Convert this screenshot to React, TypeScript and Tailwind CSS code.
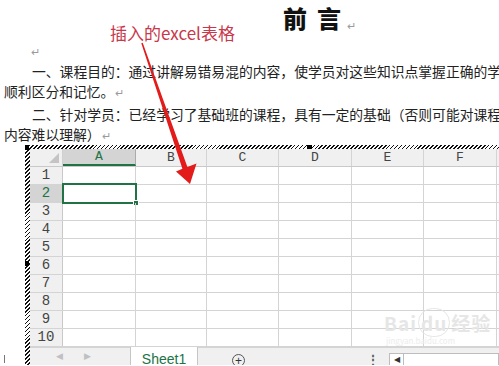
import React from 'react';

const cols = [
  { label: 'A', w: 'w-[73px]' },
  { label: 'B', w: 'w-[71px]' },
  { label: 'C', w: 'w-[72px]' },
  { label: 'D', w: 'w-[73px]' },
  { label: 'E', w: 'w-[72px]' },
  { label: 'F', w: 'w-[73px]' },
  { label: 'G', w: 'w-[72px]' },
];

const rows = [1, 2, 3, 4, 5, 6, 7, 8, 9, 10];

const Mark = () => <span className="text-[11px] text-[#9a9a9a] ml-[1px]">↵</span>;

export default function App() {
  return (
    <div className="relative w-[499px] h-[366px] overflow-hidden bg-white font-['Noto_Sans_CJK_SC',sans-serif] text-[#222]">
      {/* Title */}
      <div className="h-[40px] pl-[283px] pt-[3px] flex items-start">
        <span className="text-[24px] leading-[30px] font-black tracking-[10px] text-[#111]">前言</span>
        <span className="text-[11px] text-[#9a9a9a] mt-[14px] -ml-[4px]">↵</span>
      </div>

      {/* Document paragraphs */}
      <div className="text-[13.8px] whitespace-nowrap">
        <div className="h-[20px] pl-[30px] leading-[20px]"><Mark /></div>
        <div className="h-[20px] pl-[32px] leading-[22px]">一、课程目的：通过讲解易错易混的内容，使学员对这些知识点掌握正确的学</div>
        <div className="h-[20px] pl-[4px] leading-[22px]">顺利区分和记忆。<Mark /></div>
        <div className="h-[23px] pl-[32px] leading-[28px]">二、针对学员：已经学习了基础班的课程，具有一定的基础（否则可能对课程</div>
        <div className="h-[22px] pl-[4px] leading-[22px]">内容难以理解）<Mark /></div>
      </div>

      {/* Embedded spreadsheet with hatched frame */}
      <div className="relative ml-[25px] pl-[5px] pt-[4px] h-[220px] bg-[repeating-linear-gradient(135deg,#111_0px,#111_1.2px,#fff_1.2px,#fff_2.8px)]">
        <div className="absolute left-0 top-0 w-[4px] h-[5px] bg-black" />
        <div className="absolute left-[282px] top-0 w-[5px] h-[4px] bg-black" />
        <div className="absolute left-0 top-[116px] w-[4px] h-[5px] bg-black" />

        <div className="bg-white h-full overflow-hidden font-['Liberation_Mono',monospace]">
          {/* Column headers */}
          <div className="flex h-[18px] bg-[#f0f0f0] border-b border-[#c9c9c9]">
            <div className="relative w-[33px] shrink-0 border-r border-[#d0d0d0]">
              <div className="absolute right-[3px] bottom-[3px] w-0 h-0 border-l-[10px] border-l-transparent border-b-[10px] border-b-[#c4c4c4]" />
            </div>
            {cols.map((c, i) => (
              <div
                key={c.label}
                className={`${c.w} shrink-0 flex items-center justify-center text-[13px] border-r ${
                  i === 0
                    ? 'bg-[#d4d4d4] text-[#217346] border-[#ababab] border-b-2 border-b-[#217346]'
                    : 'text-[#444] border-[#d4d4d4]'
                }`}
              >
                {c.label}
              </div>
            ))}
          </div>

          {/* Rows */}
          {rows.map(r => (
            <div key={r} className="flex h-[18px] border-b border-[#d4d4d4]">
              <div
                className={`w-[33px] shrink-0 flex items-center justify-center text-[14px] border-r ${
                  r === 2 ? 'bg-[#d4d4d4] text-[#217346] border-[#217346]' : 'bg-[#f0f0f0] text-[#444] border-[#c9c9c9]'
                }`}
              >
                {r}
              </div>
              {cols.map((c, i) => (
                <div key={c.label} className={`${c.w} shrink-0 relative border-r border-[#d4d4d4]`}>
                  {r === 2 && i === 0 && (
                    <div className="absolute -left-[1px] -top-[2px] w-[75px] h-[21px] border-2 border-[#217346]">
                      <div className="absolute -right-[4px] -bottom-[4px] w-[6px] h-[6px] bg-[#217346] border border-white" />
                    </div>
                  )}
                </div>
              ))}
            </div>
          ))}

          {/* Sheet tab bar */}
          <div className="flex h-[18px] bg-[#f0f0f0] font-['Liberation_Sans',sans-serif]">
            <div className="w-[100px] shrink-0 flex items-center text-[9px] text-[#c0c0c0] border-t border-[#d4d4d4]">
              <span className="ml-[26px]">◀</span>
              <span className="ml-[21px]">▶</span>
            </div>
            <div className="w-[68px] shrink-0 bg-white border-x border-[#c6c6c6] flex items-center justify-center text-[14px] text-[#217346] pt-[6px]">
              Sheet1
            </div>
            <div className="flex-1 flex items-center border-t border-[#d4d4d4]">
              <span className="ml-[34px] mt-[8px] w-[13px] h-[13px] rounded-full border border-[#555] flex items-center justify-center text-[12px] leading-none text-[#333]">+</span>
              <span className="ml-[122px] mt-[6px] text-[12px] font-bold text-[#555]">⋮</span>
              <div className="ml-[10px] mt-[7px] h-[14px] flex-1 bg-white border border-[#bdbdbd] flex">
                <div className="w-[14px] border-r border-[#bdbdbd] flex items-center justify-center text-[8px] text-[#333]">◀</div>
              </div>
            </div>
          </div>
        </div>
      </div>

      {/* Cursor mark at bottom-left */}
      <div className="absolute left-[4px] top-[355px] w-[1px] h-[8px] bg-[#777]" />

      {/* Watermark */}
      <div className="absolute left-[384px] top-[313px] text-[#e6e6e6] leading-none pointer-events-none">
        <div className="text-[19px] font-bold tracking-[1px]">Bai<span className="border border-[#e6e6e6] rounded-full px-[2px] mx-[1px]">du</span>经验</div>
        <div className="text-[8px] mt-[5px] ml-[2px] text-[#ececec]">jingyan.baidu.com</div>
      </div>

      {/* Red annotation label */}
      <div className="absolute left-[110px] top-[22px] text-[17px] leading-[22px] text-[#c8374a] whitespace-nowrap">
        插入的excel表格
      </div>

      {/* Red arrow */}
      <svg className="absolute left-0 top-0" width="499" height="366" viewBox="0 0 499 366">
        <polygon
          points="141.3,43.2 142.7,42.8 187.4,167 196.5,163.5 190,184 176,171.5 182.4,168.8"
          fill="#e31b1b"
        />
      </svg>
    </div>
  );
}
